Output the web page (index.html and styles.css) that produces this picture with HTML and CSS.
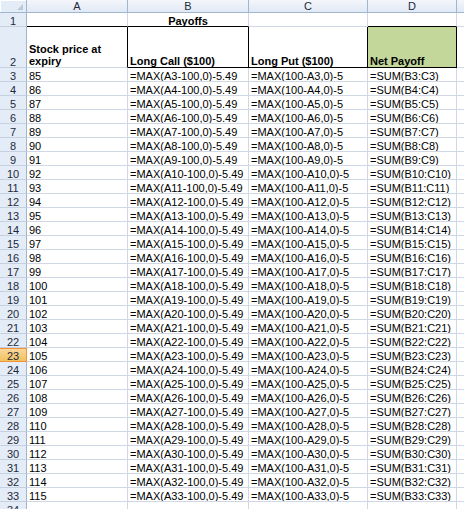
FILE: index.html
```html
<!DOCTYPE html>
<html>
<head>
<meta charset="utf-8">
<link rel="stylesheet" href="styles.css">
</head>
<body>
<div class="sheet">
  <div class="row hdr">
    <div class="c rh corner"><span class="tri"></span></div>
    <div class="c ca">A</div><div class="c cb">B</div><div class="c cc">C</div><div class="c cd">D</div><div class="c ce"></div>
  </div>
  <div class="row r1">
    <div class="c rh">1</div>
    <div class="c ca bb"></div><div class="c cb bb center bold">Payoffs</div><div class="c cc"></div><div class="c cd bb"></div><div class="c ce"></div>
  </div>
  <div class="row r2">
    <div class="c rh">2</div>
    <div class="c ca br bold wrap">Stock price at expiry</div>
    <div class="c cb br bb bold">Long Call ($100)</div>
    <div class="c cc br bb bold">Long Put ($100)</div>
    <div class="c cd br bb bold green">Net Payoff</div>
    <div class="c ce"></div>
  </div>
  <div class="row"><div class="c rh">3</div><div class="c ca">85</div><div class="c cb">=MAX(A3-100,0)-5.49</div><div class="c cc">=MAX(100-A3,0)-5</div><div class="c cd">=SUM(B3:C3)</div><div class="c ce"></div></div>
  <div class="row"><div class="c rh">4</div><div class="c ca">86</div><div class="c cb">=MAX(A4-100,0)-5.49</div><div class="c cc">=MAX(100-A4,0)-5</div><div class="c cd">=SUM(B4:C4)</div><div class="c ce"></div></div>
  <div class="row"><div class="c rh">5</div><div class="c ca">87</div><div class="c cb">=MAX(A5-100,0)-5.49</div><div class="c cc">=MAX(100-A5,0)-5</div><div class="c cd">=SUM(B5:C5)</div><div class="c ce"></div></div>
  <div class="row"><div class="c rh">6</div><div class="c ca">88</div><div class="c cb">=MAX(A6-100,0)-5.49</div><div class="c cc">=MAX(100-A6,0)-5</div><div class="c cd">=SUM(B6:C6)</div><div class="c ce"></div></div>
  <div class="row"><div class="c rh">7</div><div class="c ca">89</div><div class="c cb">=MAX(A7-100,0)-5.49</div><div class="c cc">=MAX(100-A7,0)-5</div><div class="c cd">=SUM(B7:C7)</div><div class="c ce"></div></div>
  <div class="row"><div class="c rh">8</div><div class="c ca">90</div><div class="c cb">=MAX(A8-100,0)-5.49</div><div class="c cc">=MAX(100-A8,0)-5</div><div class="c cd">=SUM(B8:C8)</div><div class="c ce"></div></div>
  <div class="row"><div class="c rh">9</div><div class="c ca">91</div><div class="c cb">=MAX(A9-100,0)-5.49</div><div class="c cc">=MAX(100-A9,0)-5</div><div class="c cd">=SUM(B9:C9)</div><div class="c ce"></div></div>
  <div class="row"><div class="c rh">10</div><div class="c ca">92</div><div class="c cb">=MAX(A10-100,0)-5.49</div><div class="c cc">=MAX(100-A10,0)-5</div><div class="c cd">=SUM(B10:C10)</div><div class="c ce"></div></div>
  <div class="row"><div class="c rh">11</div><div class="c ca">93</div><div class="c cb">=MAX(A11-100,0)-5.49</div><div class="c cc">=MAX(100-A11,0)-5</div><div class="c cd">=SUM(B11:C11)</div><div class="c ce"></div></div>
  <div class="row"><div class="c rh">12</div><div class="c ca">94</div><div class="c cb">=MAX(A12-100,0)-5.49</div><div class="c cc">=MAX(100-A12,0)-5</div><div class="c cd">=SUM(B12:C12)</div><div class="c ce"></div></div>
  <div class="row"><div class="c rh">13</div><div class="c ca">95</div><div class="c cb">=MAX(A13-100,0)-5.49</div><div class="c cc">=MAX(100-A13,0)-5</div><div class="c cd">=SUM(B13:C13)</div><div class="c ce"></div></div>
  <div class="row"><div class="c rh">14</div><div class="c ca">96</div><div class="c cb">=MAX(A14-100,0)-5.49</div><div class="c cc">=MAX(100-A14,0)-5</div><div class="c cd">=SUM(B14:C14)</div><div class="c ce"></div></div>
  <div class="row"><div class="c rh">15</div><div class="c ca">97</div><div class="c cb">=MAX(A15-100,0)-5.49</div><div class="c cc">=MAX(100-A15,0)-5</div><div class="c cd">=SUM(B15:C15)</div><div class="c ce"></div></div>
  <div class="row"><div class="c rh">16</div><div class="c ca">98</div><div class="c cb">=MAX(A16-100,0)-5.49</div><div class="c cc">=MAX(100-A16,0)-5</div><div class="c cd">=SUM(B16:C16)</div><div class="c ce"></div></div>
  <div class="row"><div class="c rh">17</div><div class="c ca">99</div><div class="c cb">=MAX(A17-100,0)-5.49</div><div class="c cc">=MAX(100-A17,0)-5</div><div class="c cd">=SUM(B17:C17)</div><div class="c ce"></div></div>
  <div class="row"><div class="c rh">18</div><div class="c ca">100</div><div class="c cb">=MAX(A18-100,0)-5.49</div><div class="c cc">=MAX(100-A18,0)-5</div><div class="c cd">=SUM(B18:C18)</div><div class="c ce"></div></div>
  <div class="row"><div class="c rh">19</div><div class="c ca">101</div><div class="c cb">=MAX(A19-100,0)-5.49</div><div class="c cc">=MAX(100-A19,0)-5</div><div class="c cd">=SUM(B19:C19)</div><div class="c ce"></div></div>
  <div class="row"><div class="c rh">20</div><div class="c ca">102</div><div class="c cb">=MAX(A20-100,0)-5.49</div><div class="c cc">=MAX(100-A20,0)-5</div><div class="c cd">=SUM(B20:C20)</div><div class="c ce"></div></div>
  <div class="row"><div class="c rh">21</div><div class="c ca">103</div><div class="c cb">=MAX(A21-100,0)-5.49</div><div class="c cc">=MAX(100-A21,0)-5</div><div class="c cd">=SUM(B21:C21)</div><div class="c ce"></div></div>
  <div class="row"><div class="c rh">22</div><div class="c ca">104</div><div class="c cb">=MAX(A22-100,0)-5.49</div><div class="c cc">=MAX(100-A22,0)-5</div><div class="c cd">=SUM(B22:C22)</div><div class="c ce"></div></div>
  <div class="row"><div class="c rh active">23</div><div class="c ca">105</div><div class="c cb">=MAX(A23-100,0)-5.49</div><div class="c cc">=MAX(100-A23,0)-5</div><div class="c cd">=SUM(B23:C23)</div><div class="c ce"></div></div>
  <div class="row"><div class="c rh">24</div><div class="c ca">106</div><div class="c cb">=MAX(A24-100,0)-5.49</div><div class="c cc">=MAX(100-A24,0)-5</div><div class="c cd">=SUM(B24:C24)</div><div class="c ce"></div></div>
  <div class="row"><div class="c rh">25</div><div class="c ca">107</div><div class="c cb">=MAX(A25-100,0)-5.49</div><div class="c cc">=MAX(100-A25,0)-5</div><div class="c cd">=SUM(B25:C25)</div><div class="c ce"></div></div>
  <div class="row"><div class="c rh">26</div><div class="c ca">108</div><div class="c cb">=MAX(A26-100,0)-5.49</div><div class="c cc">=MAX(100-A26,0)-5</div><div class="c cd">=SUM(B26:C26)</div><div class="c ce"></div></div>
  <div class="row"><div class="c rh">27</div><div class="c ca">109</div><div class="c cb">=MAX(A27-100,0)-5.49</div><div class="c cc">=MAX(100-A27,0)-5</div><div class="c cd">=SUM(B27:C27)</div><div class="c ce"></div></div>
  <div class="row"><div class="c rh">28</div><div class="c ca">110</div><div class="c cb">=MAX(A28-100,0)-5.49</div><div class="c cc">=MAX(100-A28,0)-5</div><div class="c cd">=SUM(B28:C28)</div><div class="c ce"></div></div>
  <div class="row"><div class="c rh">29</div><div class="c ca">111</div><div class="c cb">=MAX(A29-100,0)-5.49</div><div class="c cc">=MAX(100-A29,0)-5</div><div class="c cd">=SUM(B29:C29)</div><div class="c ce"></div></div>
  <div class="row"><div class="c rh">30</div><div class="c ca">112</div><div class="c cb">=MAX(A30-100,0)-5.49</div><div class="c cc">=MAX(100-A30,0)-5</div><div class="c cd">=SUM(B30:C30)</div><div class="c ce"></div></div>
  <div class="row"><div class="c rh">31</div><div class="c ca">113</div><div class="c cb">=MAX(A31-100,0)-5.49</div><div class="c cc">=MAX(100-A31,0)-5</div><div class="c cd">=SUM(B31:C31)</div><div class="c ce"></div></div>
  <div class="row"><div class="c rh">32</div><div class="c ca">114</div><div class="c cb">=MAX(A32-100,0)-5.49</div><div class="c cc">=MAX(100-A32,0)-5</div><div class="c cd">=SUM(B32:C32)</div><div class="c ce"></div></div>
  <div class="row"><div class="c rh">33</div><div class="c ca">115</div><div class="c cb">=MAX(A33-100,0)-5.49</div><div class="c cc">=MAX(100-A33,0)-5</div><div class="c cd">=SUM(B33:C33)</div><div class="c ce"></div></div>
  <div class="row"><div class="c rh">34</div><div class="c ca"></div><div class="c cb"></div><div class="c cc"></div><div class="c cd"></div><div class="c ce"></div></div>
</div>
</body>
</html>
```

FILE: styles.css
```css
html, body {
  margin: 0;
  padding: 0;
  background: #ffffff;
}
body {
  width: 464px;
  height: 509px;
  overflow: hidden;
  font-family: "Liberation Sans", Arial, sans-serif;
  font-size: 11px;
  color: #000;
}
.sheet {
  display: flex;
  flex-direction: column;
  width: 464px;
  height: 509px;
  overflow: hidden;
}
.row {
  display: flex;
  height: 14px;
  flex: none;
}
.row.hdr { height: 13px; }
.row.r1 { height: 14px; }
.row.r2 { height: 41px; }

.c {
  box-sizing: border-box;
  flex: none;
  height: 100%;
  border-right: 1px solid #d0d7e5;
  border-bottom: 1px solid #d0d7e5;
  padding: 0 2px 0 2px;
  display: flex;
  align-items: flex-end;
  line-height: 10px;
  white-space: nowrap;
  overflow: hidden;
}
.rh {
  width: 27px;
  background: #e4ecf7;
  border-right: 1px solid #9eb6ce;
  border-bottom: 1px solid #c5d1e0;
  justify-content: center;
  color: #1e2a3a;
  padding: 0;
}
.ca { width: 101px; }
.cb { width: 121px; }
.cc { width: 119px; }
.cd { width: 89px; }
.ce { width: 64px; }

.hdr .c {
  background: linear-gradient(#f3f6fb, #e1e9f5);
  border-right: 1px solid #9eb6ce;
  border-bottom: 1px solid #9eb6ce;
  justify-content: center;
  align-items: center;
  line-height: 12px;
  color: #1e2a3a;
  padding: 0;
}
.hdr .corner {
  position: relative;
  background: #e4ecf7;
  box-shadow: inset 1px 1px 0 #ffffff;
}
.tri {
  position: absolute;
  right: 3px;
  bottom: 2px;
  width: 0;
  height: 0;
  border-left: 6px solid transparent;
  border-bottom: 6px solid #b9c9da;
}
.r2 .c { line-height: 12px; }
.r2 .rh { line-height: 10px; }
.wrap { white-space: normal; }
.bold { font-weight: bold; }
.center { justify-content: center; }
.bb { border-bottom: 1px solid #000; }
.br { border-right: 1px solid #000; }
.green { background: #c4d79b; }
.rh.active {
  background: linear-gradient(#f9d99f, #f1c15f);
  border-right: 1px solid #f29436;
  border-bottom: 1px solid #f29436;
  box-shadow: inset 0 1px 0 #f29436;
}
```
